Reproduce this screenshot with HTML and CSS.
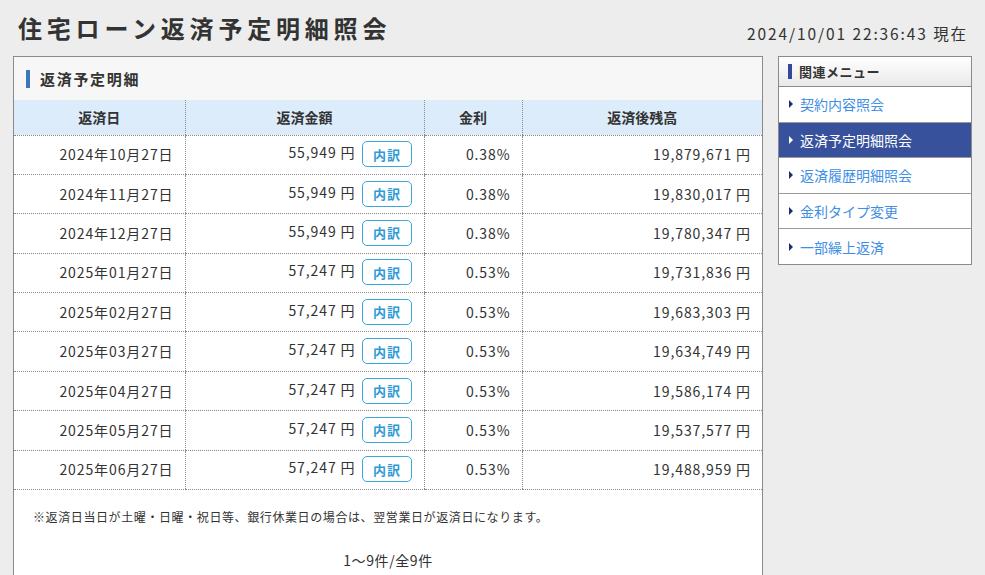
FILE: index.html
```html
<!DOCTYPE html>
<html lang="ja">
<head>
<meta charset="utf-8">
<title>住宅ローン返済予定明細照会</title>
<link rel="stylesheet" href="styles.css">
</head>
<body>
<header class="page-head">
  <h1 class="page-title">住宅ローン返済予定明細照会</h1>
  <div class="timestamp">2024/10/01 22:36:43 現在</div>
</header>
<div class="layout">
  <main class="panel">
    <div class="panel-head"><span class="bar"></span>返済予定明細</div>
    <table class="sched">
      <colgroup>
        <col class="c1"><col class="c2"><col class="c3"><col class="c4">
      </colgroup>
      <thead>
        <tr><th>返済日</th><th>返済金額</th><th>金利</th><th>返済後残高</th></tr>
      </thead>
      <tbody>
        <tr><td>2024年10月27日</td><td>55,949 円<span class="btn">内訳</span></td><td>0.38%</td><td>19,879,671 円</td></tr>
        <tr><td>2024年11月27日</td><td>55,949 円<span class="btn">内訳</span></td><td>0.38%</td><td>19,830,017 円</td></tr>
        <tr><td>2024年12月27日</td><td>55,949 円<span class="btn">内訳</span></td><td>0.38%</td><td>19,780,347 円</td></tr>
        <tr><td>2025年01月27日</td><td>57,247 円<span class="btn">内訳</span></td><td>0.53%</td><td>19,731,836 円</td></tr>
        <tr><td>2025年02月27日</td><td>57,247 円<span class="btn">内訳</span></td><td>0.53%</td><td>19,683,303 円</td></tr>
        <tr><td>2025年03月27日</td><td>57,247 円<span class="btn">内訳</span></td><td>0.53%</td><td>19,634,749 円</td></tr>
        <tr><td>2025年04月27日</td><td>57,247 円<span class="btn">内訳</span></td><td>0.53%</td><td>19,586,174 円</td></tr>
        <tr><td>2025年05月27日</td><td>57,247 円<span class="btn">内訳</span></td><td>0.53%</td><td>19,537,577 円</td></tr>
        <tr><td>2025年06月27日</td><td>57,247 円<span class="btn">内訳</span></td><td>0.53%</td><td>19,488,959 円</td></tr>
      </tbody>
    </table>
    <p class="note">※返済日当日が土曜・日曜・祝日等、銀行休業日の場合は、翌営業日が返済日になります。</p>
    <p class="pager">1〜9件/全9件</p>
  </main>
  <aside class="side">
    <div class="side-head"><span class="bar"></span>関連メニュー</div>
    <ul class="side-menu">
      <li><a class="item">契約内容照会</a></li>
      <li><a class="item active">返済予定明細照会</a></li>
      <li><a class="item">返済履歴明細照会</a></li>
      <li><a class="item">金利タイプ変更</a></li>
      <li><a class="item">一部繰上返済</a></li>
    </ul>
  </aside>
</div>
</body>
</html>
```

FILE: styles.css
```css
* { box-sizing: border-box; }
html, body { margin: 0; padding: 0; }
body {
  background: #ededed;
  color: #333;
  font-family: "Noto Sans CJK JP", "Noto Sans", sans-serif;
  padding: 0 13px;
  height: 575px;
  overflow: hidden;
}
.page-head {
  height: 56px;
  display: flex;
  align-items: flex-start;
  justify-content: space-between;
}
.page-title {
  margin: 10px 0 0 5px;
  font-size: 24px;
  line-height: 36px;
  font-weight: bold;
  letter-spacing: 4.8px;
  color: #333;
}
.timestamp {
  margin: 21px 4px 0 0;
  font-size: 15.5px;
  line-height: 24px;
  letter-spacing: 1.9px;
  color: #333;
}
.layout {
  display: flex;
  align-items: flex-start;
  gap: 15px;
}
.panel {
  width: 750px;
  height: 519px;
  background: #fff;
  border: 1px solid #8a8a8a;
  border-bottom: none;
}
.panel-head {
  height: 43px;
  background: #f7f7f7;
  display: flex;
  align-items: center;
  padding-left: 12px;
  font-size: 15px;
  font-weight: bold;
  color: #333;
  letter-spacing: 1.7px;
}
.panel-head .bar {
  width: 4px;
  height: 18px;
  background: #3d77b8;
  margin-right: 10px;
}
.sched {
  width: 748px;
  border-collapse: collapse;
  table-layout: fixed;
  font-size: 14px;
}
.sched .c1 { width: 171px; }
.sched .c2 { width: 239px; }
.sched .c3 { width: 98px; }
.sched .c4 { width: 240px; }
.sched th {
  height: 35px;
  background: #dcecfb;
  font-weight: bold;
  font-size: 14px;
  text-align: center;
  border-left: 1px dotted #8a8a8a;
  border-bottom: 1px dotted #8a8a8a;
  padding: 0;
}
.sched td {
  height: 39.4px;
  text-align: right;
  padding: 0 11px 1px 0;
  border-left: 1px dotted #8a8a8a;
  border-bottom: 1px dotted #8a8a8a;
  white-space: nowrap;
  color: #333;
  letter-spacing: 0.9px;
}
.sched th:first-child, .sched td:first-child { border-left: none; }
.btn {
  display: inline-flex;
  align-items: center;
  justify-content: center;
  width: 50px;
  height: 26px;
  margin-left: 6px;
  margin-right: 1px;
  border: 1px solid #3aa8dc;
  border-radius: 5px;
  color: #2e9ad6;
  font-size: 13px;
  font-weight: bold;
  vertical-align: middle;
  background: #fff;
  letter-spacing: 1px;
  padding-left: 1px;
}
.note {
  margin: 18px 0 0 19px;
  font-size: 12px;
  line-height: 18px;
  letter-spacing: 0.6px;
  color: #333;
}
.pager {
  margin: 24px 0 0;
  text-align: center;
  font-size: 14px;
  line-height: 20px;
  letter-spacing: 0.6px;
  color: #333;
}
.side {
  width: 195px;
  border: 1px solid #8a8a8a;
  background: #fff;
}
.side-head {
  height: 30px;
  background: linear-gradient(#ffffff, #e9e9e9);
  border-bottom: 1px solid #8a8a8a;
  display: flex;
  align-items: center;
  padding-left: 9px;
  font-size: 13px;
  font-weight: bold;
  color: #333;
  letter-spacing: 0.5px;
}
.side-head .bar {
  width: 4px;
  height: 15px;
  background: #33489a;
  margin-right: 7px;
}
.side-menu {
  list-style: none;
  margin: 0;
  padding: 0;
}
.side-menu li { border-bottom: 1px solid #9a9a9a; }
.side-menu li:last-child { border-bottom: none; }
.item {
  display: flex;
  align-items: center;
  height: 34.6px;
  padding-left: 10px;
  font-size: 14px;
  color: #3f8fe4;
  text-decoration: none;
}
.item::before {
  content: "";
  width: 0;
  height: 0;
  border-top: 4px solid transparent;
  border-bottom: 4px solid transparent;
  border-left: 4px solid #1c2d70;
  margin-right: 7px;
}
.item.active {
  background: #37519c;
  color: #fff;
}
.item.active::before { border-left-color: #fff; }
```
